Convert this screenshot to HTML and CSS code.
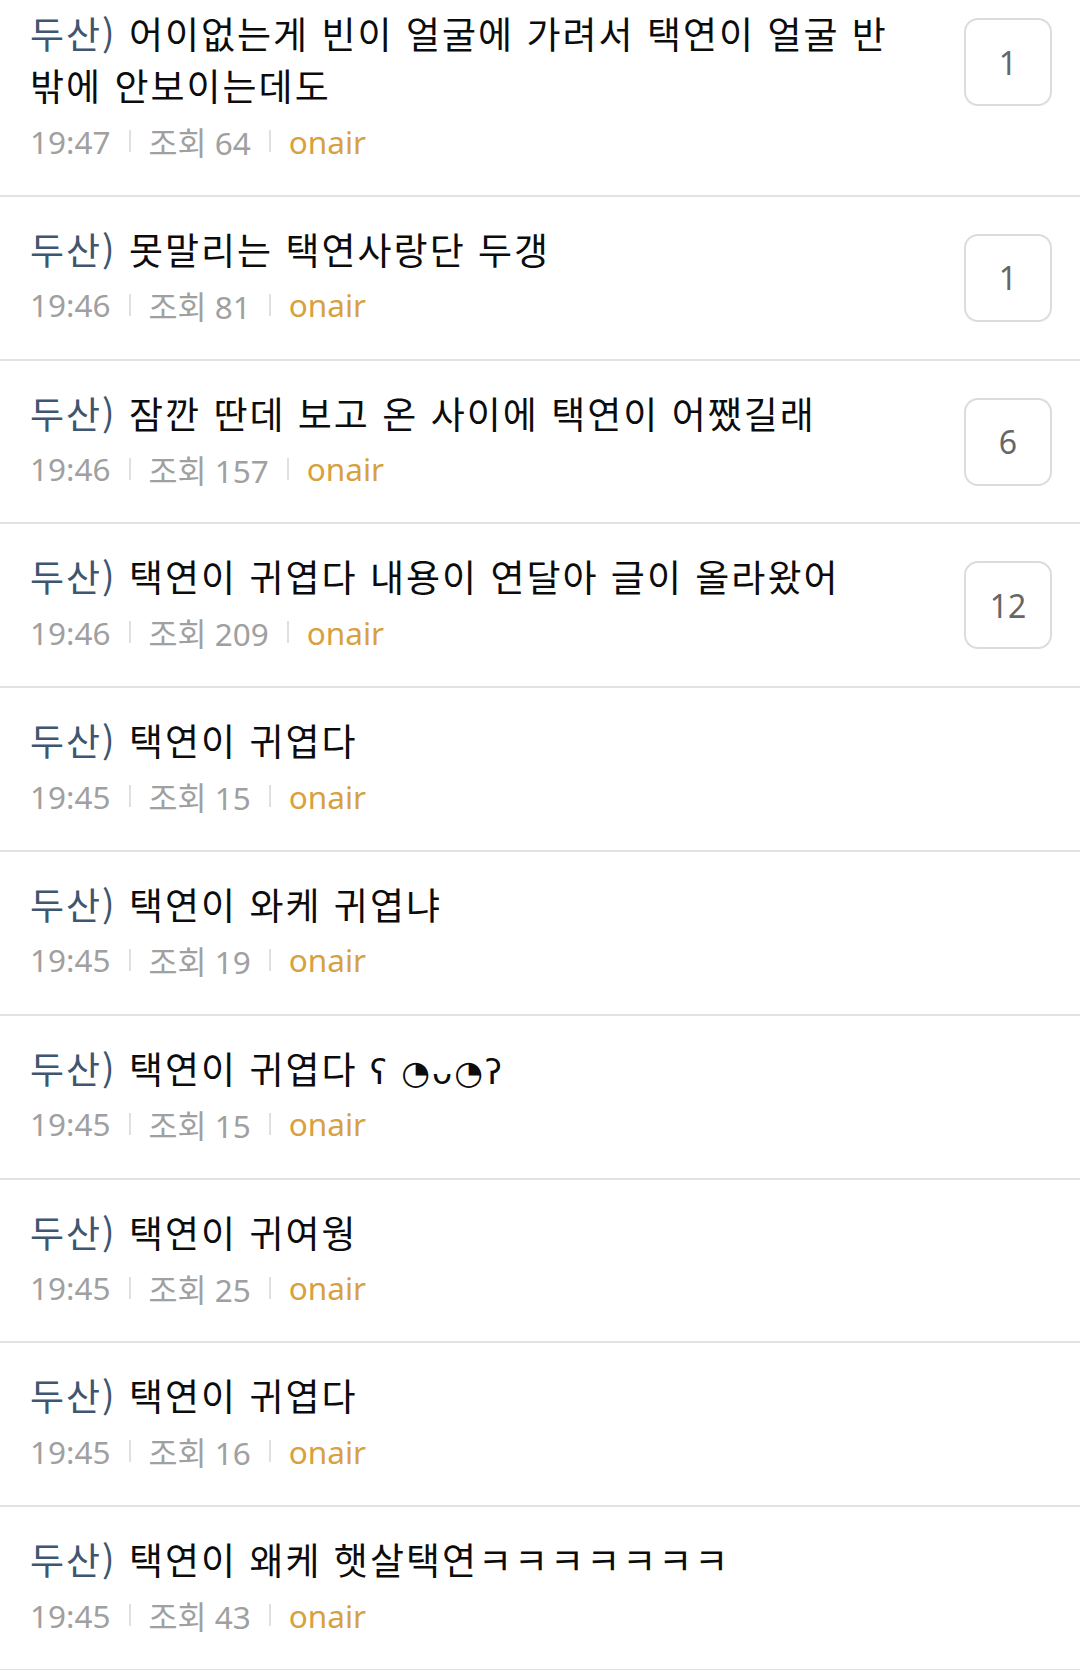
FILE: index.html
```html
<!DOCTYPE html>
<html lang="ko">
<head>
  <meta charset="UTF-8" />
  <meta name="viewport" content="width=device-width, initial-scale=1.0"/>
  <title>게시판</title>
  <link rel="stylesheet" href="styles.css">
</head>
<body>

  <ul class="board">
    <li class="post">
      <div class="info">
        <div class="title"><span class="tag">두산)</span> 어이없는게 빈이 얼굴에 가려서 택연이 얼굴 반 밖에 안보이는데도</div>
        <div class="meta"><span>19:47</span><i></i><span>조회 64</span><i></i><span class="nick">onair</span></div>
      </div>
      <div class="count">1</div>
    </li>
    <li class="post">
      <div class="info">
        <div class="title"><span class="tag">두산)</span> 못말리는 택연사랑단 두갱</div>
        <div class="meta"><span>19:46</span><i></i><span>조회 81</span><i></i><span class="nick">onair</span></div>
      </div>
      <div class="count">1</div>
    </li>
    <li class="post">
      <div class="info">
        <div class="title"><span class="tag">두산)</span> 잠깐 딴데 보고 온 사이에 택연이 어쨌길래</div>
        <div class="meta"><span>19:46</span><i></i><span>조회 157</span><i></i><span class="nick">onair</span></div>
      </div>
      <div class="count">6</div>
    </li>
    <li class="post">
      <div class="info">
        <div class="title"><span class="tag">두산)</span> 택연이 귀엽다 내용이 연달아 글이 올라왔어</div>
        <div class="meta"><span>19:46</span><i></i><span>조회 209</span><i></i><span class="nick">onair</span></div>
      </div>
      <div class="count">12</div>
    </li>
    <li class="post">
      <div class="info">
        <div class="title"><span class="tag">두산)</span> 택연이 귀엽다</div>
        <div class="meta"><span>19:45</span><i></i><span>조회 15</span><i></i><span class="nick">onair</span></div>
      </div>
    </li>
    <li class="post">
      <div class="info">
        <div class="title"><span class="tag">두산)</span> 택연이 와케 귀엽냐</div>
        <div class="meta"><span>19:45</span><i></i><span>조회 19</span><i></i><span class="nick">onair</span></div>
      </div>
    </li>
    <li class="post">
      <div class="info">
        <div class="title"><span class="tag">두산)</span> 택연이 귀엽다 <span class="emo">ʕ ◔ᴗ◔ʔ</span></div>
        <div class="meta"><span>19:45</span><i></i><span>조회 15</span><i></i><span class="nick">onair</span></div>
      </div>
    </li>
    <li class="post">
      <div class="info">
        <div class="title"><span class="tag">두산)</span> 택연이 귀여웡</div>
        <div class="meta"><span>19:45</span><i></i><span>조회 25</span><i></i><span class="nick">onair</span></div>
      </div>
    </li>
    <li class="post">
      <div class="info">
        <div class="title"><span class="tag">두산)</span> 택연이 귀엽다</div>
        <div class="meta"><span>19:45</span><i></i><span>조회 16</span><i></i><span class="nick">onair</span></div>
      </div>
    </li>
    <li class="post">
      <div class="info">
        <div class="title"><span class="tag">두산)</span> 택연이 왜케 햇살택연ㅋㅋㅋㅋㅋㅋㅋ</div>
        <div class="meta"><span>19:45</span><i></i><span>조회 43</span><i></i><span class="nick">onair</span></div>
      </div>
    </li>
  </ul>

</body>
</html>
```

FILE: styles.css
```css
body {
  margin: 0;
  background: #fff;
  font-family: "Noto Sans", "Noto Sans CJK KR", sans-serif;
  overflow: hidden;
}

.board {
  list-style: none;
  margin: -19px 0 0;
  padding: 0;
}

.post {
  display: flex;
  align-items: flex-start;
  gap: 30px;
  padding: 26px 28px 32.8px 30px;
  border-bottom: 2px solid #e2e2e2;
}

.info {
  flex: 1;
  min-width: 0;
}

.title {
  font-family: "Noto Sans CJK KR", "DejaVu Sans", sans-serif;
  font-size: 37px;
  line-height: 52px;
  letter-spacing: 2px;
  color: #0c0c0c;
}

.tag {
  color: #3f5670;
}

.emo {
  font-family: "DejaVu Sans", sans-serif;
  font-size: 33px;
  line-height: 1;
  letter-spacing: 2px;
}

.meta {
  display: flex;
  align-items: center;
  margin-top: 9px;
  height: 42px;
  font-size: 31.5px;
  color: #a0a0a0;
}

.meta i {
  width: 2px;
  height: 22px;
  margin: 0 18px;
  background: #e0e0e0;
}

.meta .nick {
  color: #d8a03e;
}

.count {
  box-sizing: border-box;
  width: 88px;
  height: 88px;
  margin-top: 11px;
  border: 2px solid #dcdcdc;
  border-radius: 14px;
  display: flex;
  align-items: center;
  justify-content: center;
  font-size: 32px;
  color: #666;
}
```
